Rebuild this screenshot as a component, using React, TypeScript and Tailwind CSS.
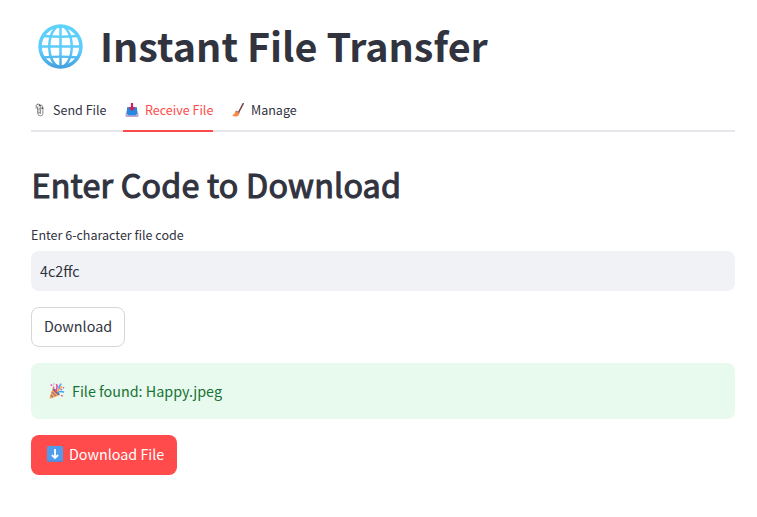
import React from "react";

function Globe() {
  return (
    <svg className="h-[45px] w-[45px] shrink-0" viewBox="0 0 44 44" fill="none">
      <defs>
        <linearGradient id="globe" gradientUnits="userSpaceOnUse" x1="0" y1="0" x2="0" y2="44">
          <stop offset="0" stopColor="#5ed3fb" />
          <stop offset="0.6" stopColor="#5bcbfc" />
          <stop offset="1" stopColor="#439cdd" />
        </linearGradient>
      </defs>
      <g stroke="url(#globe)" strokeWidth="2.4">
        <circle cx="22" cy="22" r="20" strokeWidth="3.4" />
        <ellipse cx="22" cy="22" rx="11" ry="20" />
        <path d="M22 1L22.02 43" />
        <path d="M5 11.7Q22 13.2 39 11.7" />
        <path d="M1.5 22L42.5 22.02" />
        <path d="M5 32.8Q22 31 39 32.8" />
      </g>
    </svg>
  );
}

function Clips() {
  return (
    <svg className="h-[14px] w-3 shrink-0" viewBox="0 0 12 14" fill="none" strokeLinecap="round">
      <path d="M2.2 5.2V2.7Q2.5 1 4.4 1.1Q6.2 1.2 6.2 3V8.8Q6 10.4 4.8 10.2Q3.6 10 3.7 8.5V4" stroke="#77777b" strokeWidth="1" />
      <path d="M8.9 4.2Q8.7 1.7 6.8 2M8.9 5V10.8Q8.6 13 6.3 12.9Q4 12.8 3.8 10.8V7.2Q4 5.8 5.2 5.8Q6.6 5.9 6.6 7.2V10.4" stroke="#909094" strokeWidth="1" />
      <path d="M5.2 2.2H6.2M7.7 5.1H8.8" stroke="#333338" strokeWidth="1.1" />
    </svg>
  );
}

function Inbox() {
  return (
    <svg className="h-[14px] w-[14px] shrink-0" viewBox="0 0 14 14">
      <path d="M2.3 6H11.7L13.3 10V12.8Q13.3 14 12.1 14H1.9Q.7 14 .7 12.8V10Z" fill="#b4a5d0" />
      <path d="M2 4.3H12V11L10.6 12.4H3.4L2 11Z" fill="#2589df" />
      <path d="M.7 11H2.5L3.5 12.6H10.5L11.5 11H13.3V13.5H.7Z" fill="#b8acd3" />
      <path d="M5.9 0H8.1V4.2H10.7L7 8.1L3.3 4.2H5.9Z" fill="#d61d58" />
    </svg>
  );
}

function Brush() {
  return (
    <svg className="h-[14px] w-[13px] shrink-0" viewBox="0 0 13 14">
      <path d="M11.2.7L6.8 9" stroke="#75464d" strokeWidth="1.6" strokeLinecap="round" />
      <path d="M4.4 7.5L8 9.8L6.8 11L3.2 9Z" fill="#b56d62" />
      <path d="M3.5 8.5Q2.7 11.3.1 12.5Q3.6 14.3 6 12.9Q7.4 12 7.3 10.4Z" fill="#f98b48" />
    </svg>
  );
}

function Party() {
  return (
    <svg className="h-4 w-4 shrink-0" viewBox="0 0 16 16" fill="none">
      <path d="M3.7 5.2L10.8 12L1.8 15.4Q.5 15.7.7 14.2Z" fill="#f7a84b" />
      <path d="M2.7 8.9L7.2 13.2M1.7 12L4.1 14.3" stroke="#a06a9c" strokeWidth="1.1" />
      <ellipse cx="7.2" cy="8.7" rx="1.3" ry="4.6" transform="rotate(-45 7.2 8.7)" fill="#8a5a80" />
      <path d="M6.3 8.7Q9.1 5 7.4 1.2" stroke="#ec4899" strokeWidth="1.6" />
      <path d="M8 9L12.8 3.2" stroke="#f6a842" strokeWidth="1.5" />
      <path d="M8.5 10.2Q10.7 7.5 15 9.2" stroke="#3ba6f2" strokeWidth="1.6" />
      <path d="M9.8 5.8Q9.7 2.8 12.3.6" stroke="#4ba4f1" strokeWidth="1.4" />
      <path d="M1.8 1.5L3 2.7M4.2 3.8L5.2 4.8M14 4.3L15 5.1M12.1 12.4L13.7 13.2" stroke="#e54e9c" strokeWidth="1.5" />
      <path d="M4.6.8L5.1 1.3M11.5 6.7L13.2 6.4" stroke="#9b68ce" strokeWidth="1.3" />
    </svg>
  );
}

function DownBadge() {
  return (
    <svg className="h-4 w-4 shrink-0" viewBox="0 0 16 16" fill="none">
      <rect width="16" height="16" rx="1.5" fill="#4f9cec" />
      <path d="M.5 15.2H15.5" stroke="#647dbd" />
      <path d="M8 3V12M4.9 9L8 12.1L11.1 9" stroke="#fff" strokeWidth="1.8" />
    </svg>
  );
}

export default function App() {
  return (
    <main className="h-[517px] w-[757px] overflow-hidden bg-white pr-[22px] pl-[31px] font-['Noto_Sans_CJK_SC',sans-serif] text-[14.33px] text-[#31333f]">
      <h1 className="flex h-[90px] items-center gap-[17px] pt-[3px] pl-[7px] text-[39.5px] leading-[52px] font-bold whitespace-nowrap">
        <Globe />
        <span className="pb-[3px]">Instant File Transfer</span>
      </h1>
      <nav className="flex h-[42px] border-b-2 border-[#e6e7ea] text-[12.54px] leading-5 whitespace-nowrap">
        <button className="mr-[17px] flex h-10 w-[75px] items-center gap-[7px] pl-[3px]">
          <Clips />
          <span>Send File</span>
        </button>
        <button className="mr-[19px] flex h-[42px] w-[90px] items-center gap-[6px] border-b-2 border-[#ff4b4b] pl-[2px] text-[#ff4b4b]">
          <Inbox />
          <span>Receive File</span>
        </button>
        <button className="flex h-10 items-center gap-[6px]">
          <Brush />
          <span>Manage</span>
        </button>
      </nav>
      <h2 className="mt-[29px] h-[48px] pl-[0.5px] text-[32.25px] leading-[46px] font-normal tracking-[0.21px] whitespace-nowrap [-webkit-text-stroke:1.1px_#31333f]">Enter Code to Download</h2>
      <label className="mt-4 flex h-5 items-center text-[12.54px] leading-5" htmlFor="code">Enter 6-character file code</label>
      <input
        id="code"
        className="mt-[6px] block h-10 w-full rounded-lg bg-[#f0f2f6] px-[9px] pb-[2px] outline-none"
        defaultValue="4c2ffc"
      />
      <button className="mt-4 flex h-10 w-[94px] items-center justify-center rounded-lg border border-[#d6d6d9] pb-[2px]">Download</button>
      <div className="mt-4 flex h-14 items-center gap-[7px] rounded-lg bg-[#e8f9ee] pl-[18px] text-[#177233]">
        <Party />
        <span>File found: Happy.jpeg</span>
      </div>
      <button className="mt-4 flex h-10 w-[146px] items-center gap-[6px] rounded-lg bg-[#ff4b4b] pb-[2px] pl-4 whitespace-nowrap text-white">
        <DownBadge />
        <span>Download File</span>
      </button>
    </main>
  );
}
